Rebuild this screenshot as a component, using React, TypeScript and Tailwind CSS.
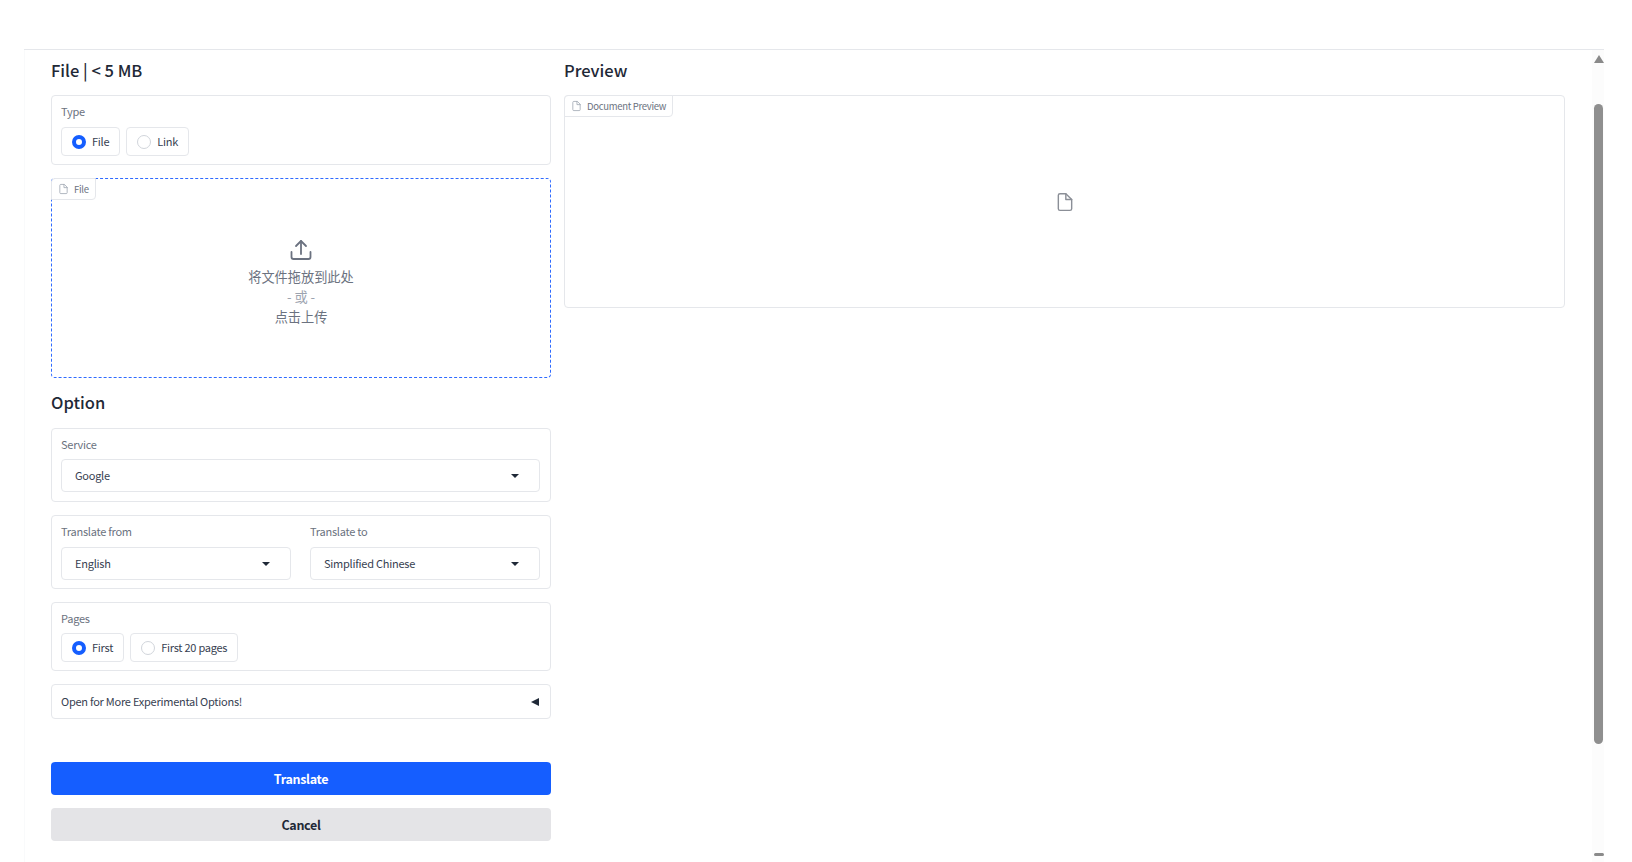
import React from 'react';

const FONT = "font-['Noto_Sans_CJK_SC','Noto_Sans',sans-serif]";

function FileIcon({ className }: { className: string }) {
    return (
        <svg viewBox="0 0 24 24" fill="none" stroke="currentColor" strokeWidth="1.7" strokeLinecap="round" strokeLinejoin="round" className={className}>
            <path d="M13 2H6a2 2 0 0 0-2 2v16a2 2 0 0 0 2 2h12a2 2 0 0 0 2-2V9z" />
            <polyline points="13 2 13 9 20 9" />
        </svg>
    );
}

function UploadIcon() {
    return (
        <svg viewBox="0 0 22 22" fill="none" stroke="#6b7280" strokeWidth="1.8" strokeLinecap="round" strokeLinejoin="round" className="w-[22px] h-[22px]">
            <path d="M1.5 13v5a2 2 0 0 0 2 2h15a2 2 0 0 0 2-2v-5" />
            <path d="M11 15V2" />
            <path d="M6 7l5-5 5 5" />
        </svg>
    );
}

function Radio({ label, checked }: { label: string; checked?: boolean }) {
    return (
        <div className="h-[29px] flex items-center gap-[6px] px-[10px] bg-white border border-[#e5e7eb] rounded-[4px] text-[11px] tracking-[-0.25px] text-[#374151]">
            {checked ? (
                <span className="w-[14px] h-[14px] rounded-full border-[4px] border-[#155eff] bg-white" />
            ) : (
                <span className="w-[14px] h-[14px] rounded-full border border-[#d1d5db] bg-white" />
            )}
            <span>{label}</span>
        </div>
    );
}

function Select({ value, className }: { value: string; className?: string }) {
    return (
        <div className={`h-[33px] flex items-center justify-between pl-[13px] pr-[20px] bg-white border border-[#e5e7eb] rounded-[4px] text-[11px] tracking-[-0.25px] text-[#374151] ${className ?? ''}`}>
            <span>{value}</span>
            <span className="w-0 h-0 border-x-[4px] border-x-transparent border-t-[4px] border-t-[#1f2937]" />
        </div>
    );
}

function Label({ children }: { children: React.ReactNode }) {
    return <div className="text-[11px] tracking-[-0.25px] leading-[18px] text-[#6b7280]">{children}</div>;
}

function Tab({ label, className }: { label: string; className?: string }) {
    return (
        <div className={`absolute -top-px -left-px h-[22px] flex items-center gap-[5px] pl-[6px] pr-[6px] bg-white border border-[#e5e7eb] rounded-br-[4px] rounded-tl-[4px] text-[9.5px] tracking-[-0.3px] text-[#6b7280] ${className ?? ''}`}>
            <FileIcon className="w-[11px] h-[12px] text-[#9ca3af]" />
            <span>{label}</span>
        </div>
    );
}

export default function App() {
    return (
        <div className={`h-[862px] w-full overflow-hidden bg-white pt-[49px] pl-[24px] pr-[28px] ${FONT}`}>
            <div className="h-[813px] flex border-t border-[#e5e7eb]">
                {/* Main content */}
                <div className="flex-1 flex gap-[13px] pl-[26px] border-l border-[#f9fafb]">
                    {/* Left column */}
                    <div className="w-[500px] flex flex-col">
                        <h2 className="mt-[8px] h-[24px] leading-[24px] text-[16.5px] font-medium text-[#1f2937]">File | &lt; 5 MB</h2>

                        <div className="mt-[13px] h-[70px] border border-[#e5e7eb] rounded-[4px] pt-[6px] pl-[9px] pr-[10px]">
                            <Label>Type</Label>
                            <div className="mt-[7px] flex gap-[6px]">
                                <Radio label="File" checked />
                                <Radio label="Link" />
                            </div>
                        </div>

                        <div className="relative mt-[13px] h-[200px] border border-dashed border-[#2f6bff] rounded-[4px] flex flex-col items-center justify-center text-[#6b7280]">
                            <Tab label="File" />
                            <div className="mt-[9px]"><UploadIcon /></div>
                            <div className="mt-[6px] text-[13.2px] leading-[20px]">将文件拖放到此处</div>
                            <div className="text-[13.2px] leading-[20px] text-[#9ca3af]">- 或 -</div>
                            <div className="text-[13.2px] leading-[20px]">点击上传</div>
                        </div>

                        <h2 className="mt-[12px] h-[24px] leading-[24px] text-[16.5px] font-medium text-[#1f2937]">Option</h2>

                        <div className="mt-[14px] h-[74px] border border-[#e5e7eb] rounded-[4px] pt-[6px] pl-[9px] pr-[10px]">
                            <Label>Service</Label>
                            <Select value="Google" className="mt-[6px]" />
                        </div>

                        <div className="mt-[13px] h-[74px] border border-[#e5e7eb] rounded-[4px] pt-[6px] pl-[9px] pr-[10px] grid grid-cols-2 gap-x-[19px]">
                            <div>
                                <Label>Translate from</Label>
                                <Select value="English" className="mt-[7px]" />
                            </div>
                            <div>
                                <Label>Translate to</Label>
                                <Select value="Simplified Chinese" className="mt-[7px]" />
                            </div>
                        </div>

                        <div className="mt-[13px] h-[69px] border border-[#e5e7eb] rounded-[4px] pt-[6px] pl-[9px] pr-[10px]">
                            <Label>Pages</Label>
                            <div className="mt-[6px] flex gap-[6px]">
                                <Radio label="First" checked />
                                <Radio label="First 20 pages" />
                            </div>
                        </div>

                        <div className="mt-[13px] h-[35px] border border-[#e5e7eb] rounded-[4px] pl-[9px] pr-[11px] flex items-center justify-between text-[11px] tracking-[-0.25px] text-[#374151]">
                            <span>Open for More Experimental Options!</span>
                            <span className="w-0 h-0 border-y-[4px] border-y-transparent border-r-[8px] border-r-[#1f2937]" />
                        </div>

                        <button className="mt-[43px] h-[33px] pt-[1px] rounded-[4px] bg-[#155eff] text-white text-[12.5px] tracking-[-0.3px] font-semibold">Translate</button>
                        <button className="mt-[13px] h-[33px] pt-[1px] rounded-[4px] bg-[#e4e4e7] text-[#1f2937] text-[12.5px] tracking-[-0.3px] font-semibold">Cancel</button>
                    </div>

                    {/* Right column */}
                    <div className="w-[1001px] flex flex-col">
                        <h2 className="mt-[8px] h-[24px] leading-[24px] text-[16.5px] font-medium text-[#1f2937]">Preview</h2>
                        <div className="relative mt-[13px] h-[213px] border border-[#e5e7eb] rounded-[4px] flex items-center justify-center">
                            <Tab label="Document Preview" />
                            <FileIcon className="w-[20px] h-[20px] text-[#8b8f97]" />
                        </div>
                    </div>
                </div>

                {/* Scrollbar */}
                <div className="w-[12px] pl-[2px] flex flex-col items-start bg-[#fcfcfc]">
                    <span className="mt-[5px] w-0 h-0 border-x-[5px] border-x-transparent border-b-[8px] border-b-[#8a8a8a]" />
                    <span className="mt-[41px] w-[9px] h-[640px] rounded-full bg-[#8f8f8f]" />
                    <span className="mt-[109px] w-[10px] h-[3px] rounded-full bg-[#8a8a8a]" />
                </div>
            </div>
        </div>
    );
}
